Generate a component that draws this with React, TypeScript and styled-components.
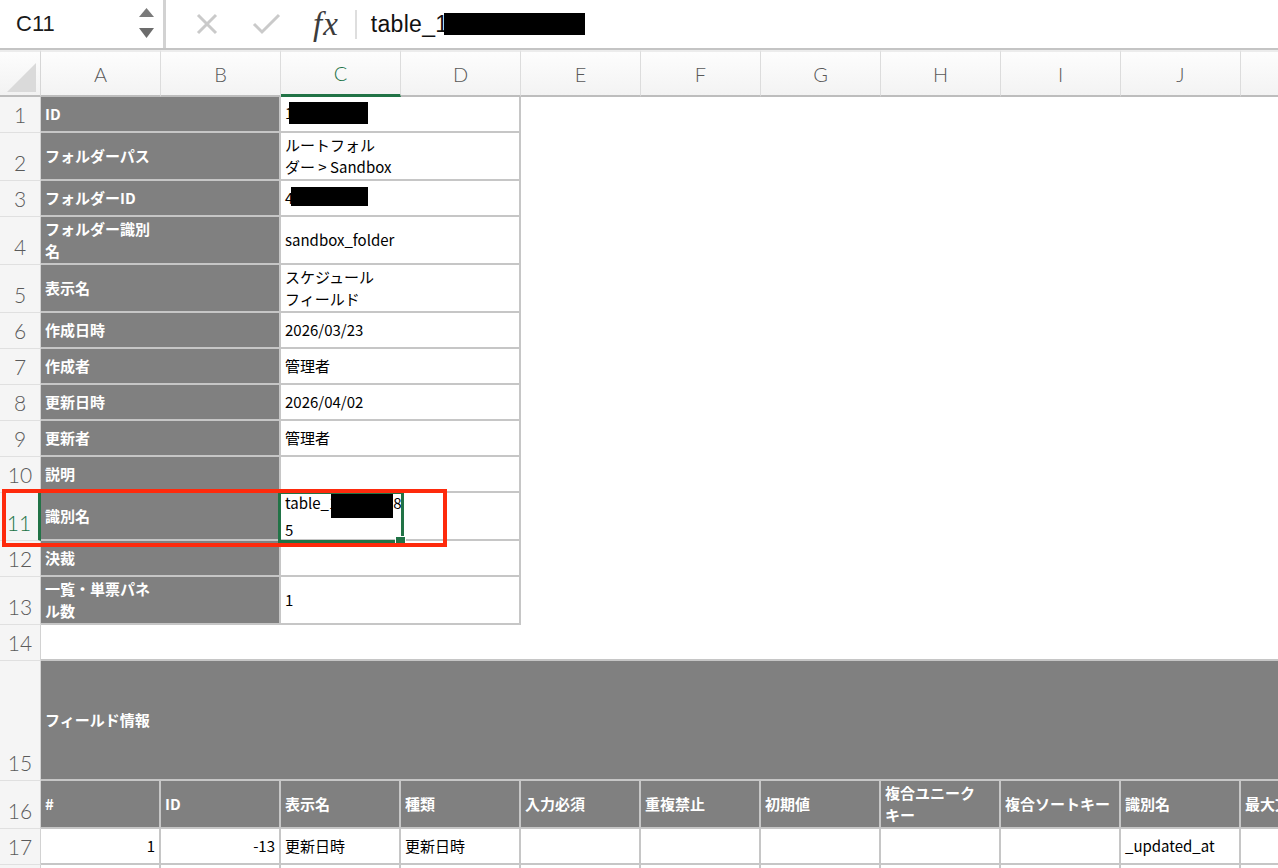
import React from 'react';
import styled, { createGlobalStyle } from 'styled-components';

const GRID = '#c6c6c6';
const GREEN = '#217346';
const LABEL_BG = '#808080';

const COLUMNS = ['A', 'B', 'C', 'D', 'E', 'F', 'G', 'H', 'I', 'J', 'K'];
const ROW_HEIGHTS = [36, 48, 36, 48, 48, 36, 36, 36, 36, 36, 48, 36, 48, 36, 120, 48, 36, 36];

const GlobalStyle = createGlobalStyle`
  html, body {
    margin: 0;
    padding: 0;
    background: #fff;
  }

  body {
    font-family: 'Noto Sans CJK JP', 'Noto Sans', sans-serif;
    overflow: hidden;
  }
`;

const Window = styled.div`
  position: relative;
  width: 1278px;
  height: 868px;
  overflow: hidden;
  background: #fff;
`;

/* ---------- formula bar ---------- */

const FormulaBar = styled.div`
  display: flex;
  align-items: center;
  height: 48px;
  border-bottom: 2px solid #c4c4c4;
  font-family: 'Liberation Sans', Arial, sans-serif;
`;

const NameBox = styled.div`
  box-sizing: border-box;
  width: 166px;
  height: 100%;
  display: flex;
  align-items: center;
  justify-content: space-between;
  padding: 0 9px 0 16px;
  border-right: 3px solid #d2d2d2;
  font-size: 22px;
  color: #1a1a1a;
`;

const Tool = styled.svg<{ $gap: number }>`
  flex: none;
  margin-left: ${p => p.$gap}px;
`;

const Fx = styled.span`
  margin-left: 32px;
  font-family: 'Liberation Serif', 'Times New Roman', serif;
  font-style: italic;
  font-size: 33px;
  line-height: 1;
  color: #3c3c3c;
  letter-spacing: 1px;
`;

const BarDivider = styled.span`
  width: 2px;
  height: 29px;
  margin-left: 16px;
  background: #dedede;
`;

const FormulaText = styled.div`
  margin-left: 14px;
  display: flex;
  align-items: center;
  font-size: 23px;
  letter-spacing: 0.3px;
  color: #111;
`;

const Redacted = styled.span<{ $w: number; $h: number; $shift?: number; $lift?: number }>`
  display: inline-block;
  width: ${p => p.$w}px;
  height: ${p => p.$h}px;
  margin-left: ${p => p.$shift ?? 0}px;
  vertical-align: middle;
  position: relative;
  top: ${p => -(p.$lift ?? 0)}px;
  background: #000;
`;

/* ---------- sheet grid ---------- */

const Sheet = styled.div`
  display: grid;
  grid-template-columns: 41px repeat(${COLUMNS.length}, 120px);
  grid-template-rows: 47px ${ROW_HEIGHTS.map(h => `${h}px`).join(' ')};
`;

const Corner = styled.div`
  box-sizing: border-box;
  display: flex;
  align-items: flex-end;
  justify-content: flex-end;
  padding: 0 4px 3px 0;
  background: linear-gradient(#fdfdfd, #f2f2f2);
  border-top: 2px solid #ececec;
  border-right: 1px solid #d6d6d6;
  border-bottom: 2px solid #bdbdbd;
`;

const ColHead = styled.div<{ $active?: boolean }>`
  box-sizing: border-box;
  display: flex;
  align-items: center;
  justify-content: center;
  background: linear-gradient(#fdfdfd, #f3f3f3);
  border-top: 2px solid #ececec;
  border-right: 1px solid #dcdcdc;
  border-bottom: ${p => (p.$active ? `3px solid ${GREEN}` : '2px solid #bdbdbd')};
  font-family: Lato, 'Open Sans', sans-serif;
  font-weight: 300;
  font-size: 20px;
  color: ${p => (p.$active ? GREEN : '#585858')};
`;

const RowHead = styled.div<{ $active?: boolean }>`
  box-sizing: border-box;
  display: flex;
  align-items: flex-end;
  justify-content: center;
  padding-bottom: 7px;
  background: #f5f5f5;
  border-bottom: 1px solid #e0e0e0;
  border-right: ${p => (p.$active ? `3px solid ${GREEN}` : '1px solid #d2d2d2')};
  font-family: Lato, 'Open Sans', sans-serif;
  font-weight: 300;
  font-size: 21px;
  line-height: 1;
  color: ${p => (p.$active ? GREEN : '#5a5a5a')};
`;

type Edges = 'box' | 'bottom' | 'none';

const Cell = styled.div<{ $span?: number; $label?: boolean; $edges?: Edges; $right?: boolean }>`
  grid-column: span ${p => p.$span ?? 1};
  box-sizing: border-box;
  display: flex;
  flex-direction: column;
  justify-content: center;
  align-items: ${p => (p.$right ? 'flex-end' : 'flex-start')};
  padding: 0 4px;
  overflow: hidden;
  white-space: nowrap;
  font-size: 15px;
  line-height: 22px;
  background: ${p => (p.$label ? LABEL_BG : '#fff')};
  color: ${p => (p.$label ? '#fff' : '#000')};
  font-weight: ${p => (p.$label ? 700 : 400)};
  border-right: ${p => (p.$edges === 'box' ? `2px solid ${GRID}` : 'none')};
  border-bottom: ${p => (p.$edges && p.$edges !== 'none' ? `2px solid ${GRID}` : 'none')};
`;

const Line = styled.span`
  display: block;
`;

/* ---------- overlays ---------- */

const Selection = styled.div`
  position: absolute;
  left: 278px;
  top: 491px;
  width: 126px;
  height: 52px;
  box-sizing: border-box;
  border: 3px solid ${GREEN};
  pointer-events: none;
`;

const FillHandle = styled.span`
  position: absolute;
  right: -5px;
  bottom: -5px;
  width: 9px;
  height: 7px;
  background: ${GREEN};
  border: 1px solid #fff;
`;

const Callout = styled.div`
  position: absolute;
  left: 2px;
  top: 489px;
  width: 445px;
  height: 58px;
  box-sizing: border-box;
  border: 4px solid #fe2a0c;
  pointer-events: none;
`;

/* ---------- data ---------- */

type Content = React.ReactNode[];

const infoRows: { label: Content; value: Content }[] = [
  { label: ['ID'], value: [<>1<Redacted $w={79} $h={22} $shift={-4} $lift={2} /></>] },
  { label: ['フォルダーパス'], value: ['ルートフォル', 'ダー > Sandbox'] },
  { label: ['フォルダーID'], value: [<>4<Redacted $w={77} $h={19} $shift={-2} $lift={3} /></>] },
  { label: ['フォルダー識別', '名'], value: ['sandbox_folder'] },
  { label: ['表示名'], value: ['スケジュール', 'フィールド'] },
  { label: ['作成日時'], value: ['2026/03/23'] },
  { label: ['作成者'], value: ['管理者'] },
  { label: ['更新日時'], value: ['2026/04/02'] },
  { label: ['更新者'], value: ['管理者'] },
  { label: ['説明'], value: [] },
  {
    label: ['識別名'],
    value: [<>table_1<Redacted $w={62} $h={28} $shift={-6} $lift={1} />8</>, '5'],
  },
  { label: ['決裁'], value: [] },
  { label: ['一覧・単票パネ', 'ル数'], value: ['1'] },
];

const fieldHeads: Content[] = [
  ['#'],
  ['ID'],
  ['表示名'],
  ['種類'],
  ['入力必須'],
  ['重複禁止'],
  ['初期値'],
  ['複合ユニーク', 'キー'],
  ['複合ソートキー'],
  ['識別名'],
  ['最大文字数'],
];

const fieldRows: { text: string; right?: boolean }[][] = [
  [
    { text: '1', right: true },
    { text: '-13', right: true },
    { text: '更新日時' },
    { text: '更新日時' },
    { text: '' },
    { text: '' },
    { text: '' },
    { text: '' },
    { text: '' },
    { text: '_updated_at' },
    { text: '' },
  ],
  COLUMNS.map(() => ({ text: '' })),
];

const lines = (content: Content) =>
  content.map((part, i) => <Line key={i}>{part}</Line>);

const App = () => (
  <Window>
    <GlobalStyle />
    <FormulaBar>
      <NameBox>
        C11
        <svg width="15" height="48" viewBox="0 0 15 48">
          <polygon points="0,17 7.5,8 15,17" fill="#7a7a7a" />
          <polygon points="0,28 7.5,38 15,28" fill="#6c6c6c" />
        </svg>
      </NameBox>
      <Tool $gap={29} width="24" height="24" viewBox="0 0 24 24">
        <path d="M3 3 L21 21 M21 3 L3 21" stroke="#cacaca" strokeWidth="3" fill="none" />
      </Tool>
      <Tool $gap={33} width="29" height="22" viewBox="0 0 29 22">
        <path d="M2 11 L10 19 L27 2" stroke="#cacaca" strokeWidth="3" fill="none" />
      </Tool>
      <Fx>fx</Fx>
      <BarDivider />
      <FormulaText>
        table_1
        <Redacted $w={141} $h={22} $shift={-4} />
      </FormulaText>
    </FormulaBar>

    <Sheet>
      <Corner>
        <svg width="29" height="29" viewBox="0 0 29 29">
          <polygon points="29,0 29,29 0,29" fill="#dadada" />
        </svg>
      </Corner>
      {COLUMNS.map(c => (
        <ColHead key={c} $active={c === 'C'}>
          {c}
        </ColHead>
      ))}

      {infoRows.map((row, i) => (
        <React.Fragment key={`info-${i}`}>
          <RowHead $active={i === 10}>{i + 1}</RowHead>
          <Cell $span={2} $label $edges="box">
            {lines(row.label)}
          </Cell>
          <Cell $span={2} $edges="box">
            {lines(row.value)}
          </Cell>
          <Cell $span={7} />
        </React.Fragment>
      ))}

      <RowHead>14</RowHead>
      <Cell $span={11} $edges="bottom" />

      <RowHead>15</RowHead>
      <Cell $span={11} $label $edges="box">
        フィールド情報
      </Cell>

      <RowHead>16</RowHead>
      {fieldHeads.map((head, i) => (
        <Cell key={`head-${i}`} $label $edges="box">
          {lines(head)}
        </Cell>
      ))}

      {fieldRows.map((row, r) => (
        <React.Fragment key={`field-${r}`}>
          <RowHead>{17 + r}</RowHead>
          {row.map((cell, i) => (
            <Cell key={i} $edges="box" $right={cell.right}>
              {cell.text}
            </Cell>
          ))}
        </React.Fragment>
      ))}
    </Sheet>

    <Selection>
      <FillHandle />
    </Selection>
    <Callout />
  </Window>
);

export default App;
